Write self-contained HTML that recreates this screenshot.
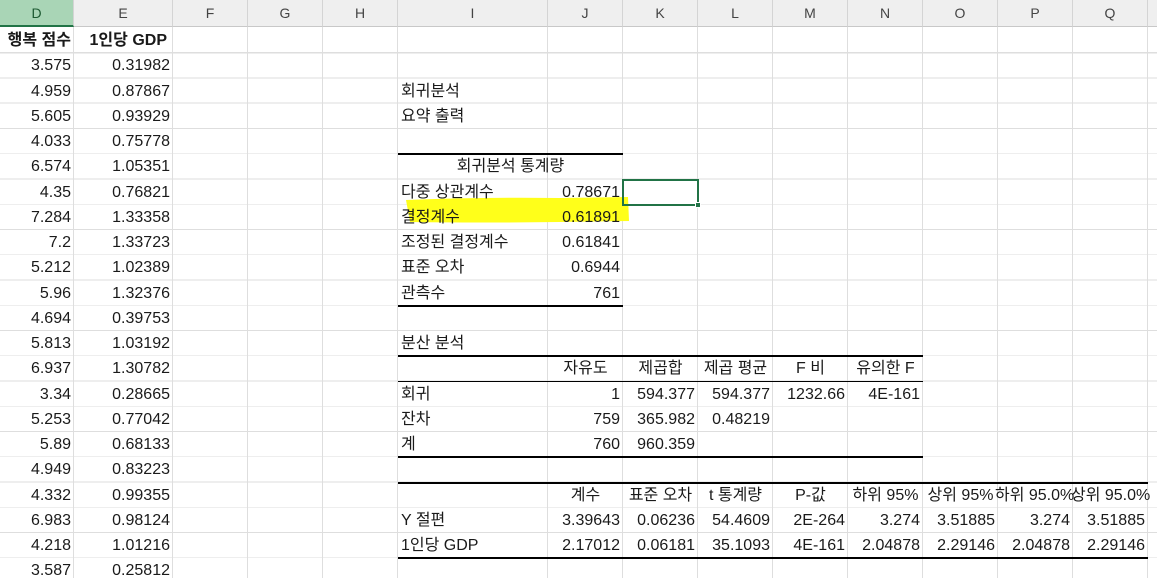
<!DOCTYPE html>
<html><head><meta charset="utf-8"><style>
body{margin:0;width:1157px;height:578px;overflow:hidden;background:#fff;position:relative;font-family:"Liberation Sans","Noto Sans CJK KR","NanumGothic",sans-serif;font-size:16px;color:#1a1a1a}
#grid{position:absolute;left:0;top:28px;width:1157px;height:550px;background:repeating-linear-gradient(to bottom,transparent 0,transparent 24.25px,#dedede 24.25px,#dedede 25.25px)}
.v{position:absolute;top:0;width:1px;height:578px;background:#dedede}
.hd{position:absolute;top:0;height:27px;line-height:27px;background:#efefef;border-right:1px solid #d4d4d4;border-bottom:1px solid #c8c8c8;text-align:center;font-size:14px;color:#444;box-sizing:border-box}
.c{position:absolute;height:25px;line-height:26px;white-space:nowrap;box-sizing:border-box}
.r{text-align:right;padding-right:3px}
.l{padding-left:3px}
.m{text-align:center}
.b{font-weight:bold}
.t{position:absolute;height:2px;background:#000}
</style></head><body>
<div id="grid"></div>
<div class="v" style="left:73px"></div><div class="v" style="left:172px"></div><div class="v" style="left:247px"></div><div class="v" style="left:322px"></div><div class="v" style="left:397px"></div><div class="v" style="left:547px"></div><div class="v" style="left:622px"></div><div class="v" style="left:697px"></div><div class="v" style="left:772px"></div><div class="v" style="left:847px"></div><div class="v" style="left:922px"></div><div class="v" style="left:997px"></div><div class="v" style="left:1072px"></div><div class="v" style="left:1147px"></div>

<div class="hd" style="left:0;width:74px;background:#a9d5b6;color:#1d5a32;border-bottom:2px solid #217346">D</div>
<div class="hd" style="left:74px;width:99px">E</div>
<div class="hd" style="left:173px;width:75px">F</div>
<div class="hd" style="left:248px;width:75px">G</div>
<div class="hd" style="left:323px;width:75px">H</div>
<div class="hd" style="left:398px;width:150px">I</div>
<div class="hd" style="left:548px;width:75px">J</div>
<div class="hd" style="left:623px;width:75px">K</div>
<div class="hd" style="left:698px;width:75px">L</div>
<div class="hd" style="left:773px;width:75px">M</div>
<div class="hd" style="left:848px;width:75px">N</div>
<div class="hd" style="left:923px;width:75px">O</div>
<div class="hd" style="left:998px;width:75px">P</div>
<div class="hd" style="left:1073px;width:75px">Q</div>
<div class="hd" style="left:1148px;width:9px;border-right:none"></div>

<svg style="position:absolute;left:0;top:0" width="1157" height="578"><path d="M406 200 Q480 197 560 198 L628 197 L629 221 L560 222 Q480 223 410 222 Z" fill="#ffff1a"/></svg>

<!-- D/E -->
<div class="c r b" style="left:0;width:74px;top:28px">행복 점수</div>
<div class="c r b" style="left:74px;width:99px;top:28px;padding-right:6px">1인당 GDP</div>
<div class="c r" style="left:0;width:74px;top:53.25px">3.575</div><div class="c r" style="left:74px;width:99px;top:53.25px">0.31982</div>
<div class="c r" style="left:0;width:74px;top:78.5px">4.959</div><div class="c r" style="left:74px;width:99px;top:78.5px">0.87867</div>
<div class="c r" style="left:0;width:74px;top:103.75px">5.605</div><div class="c r" style="left:74px;width:99px;top:103.75px">0.93929</div>
<div class="c r" style="left:0;width:74px;top:129px">4.033</div><div class="c r" style="left:74px;width:99px;top:129px">0.75778</div>
<div class="c r" style="left:0;width:74px;top:154.25px">6.574</div><div class="c r" style="left:74px;width:99px;top:154.25px">1.05351</div>
<div class="c r" style="left:0;width:74px;top:179.5px">4.35</div><div class="c r" style="left:74px;width:99px;top:179.5px">0.76821</div>
<div class="c r" style="left:0;width:74px;top:204.75px">7.284</div><div class="c r" style="left:74px;width:99px;top:204.75px">1.33358</div>
<div class="c r" style="left:0;width:74px;top:230px">7.2</div><div class="c r" style="left:74px;width:99px;top:230px">1.33723</div>
<div class="c r" style="left:0;width:74px;top:255.25px">5.212</div><div class="c r" style="left:74px;width:99px;top:255.25px">1.02389</div>
<div class="c r" style="left:0;width:74px;top:280.5px">5.96</div><div class="c r" style="left:74px;width:99px;top:280.5px">1.32376</div>
<div class="c r" style="left:0;width:74px;top:305.75px">4.694</div><div class="c r" style="left:74px;width:99px;top:305.75px">0.39753</div>
<div class="c r" style="left:0;width:74px;top:331px">5.813</div><div class="c r" style="left:74px;width:99px;top:331px">1.03192</div>
<div class="c r" style="left:0;width:74px;top:356.25px">6.937</div><div class="c r" style="left:74px;width:99px;top:356.25px">1.30782</div>
<div class="c r" style="left:0;width:74px;top:381.5px">3.34</div><div class="c r" style="left:74px;width:99px;top:381.5px">0.28665</div>
<div class="c r" style="left:0;width:74px;top:406.75px">5.253</div><div class="c r" style="left:74px;width:99px;top:406.75px">0.77042</div>
<div class="c r" style="left:0;width:74px;top:432px">5.89</div><div class="c r" style="left:74px;width:99px;top:432px">0.68133</div>
<div class="c r" style="left:0;width:74px;top:457.25px">4.949</div><div class="c r" style="left:74px;width:99px;top:457.25px">0.83223</div>
<div class="c r" style="left:0;width:74px;top:482.5px">4.332</div><div class="c r" style="left:74px;width:99px;top:482.5px">0.99355</div>
<div class="c r" style="left:0;width:74px;top:507.75px">6.983</div><div class="c r" style="left:74px;width:99px;top:507.75px">0.98124</div>
<div class="c r" style="left:0;width:74px;top:533px">4.218</div><div class="c r" style="left:74px;width:99px;top:533px">1.01216</div>
<div class="c r" style="left:0;width:74px;top:558.25px">3.587</div><div class="c r" style="left:74px;width:99px;top:558.25px">0.25812</div>

<!-- summary -->
<div class="c l" style="left:398px;top:78.5px">회귀분석</div>
<div class="c l" style="left:398px;top:103.75px">요약 출력</div>
<div class="c m" style="left:398px;width:225px;top:154.25px">회귀분석 통계량</div>
<div class="c l" style="left:398px;top:179.5px">다중 상관계수</div><div class="c r" style="left:548px;width:75px;top:179.5px">0.78671</div>
<div class="c l" style="left:398px;top:204.75px">결정계수</div><div class="c r" style="left:548px;width:75px;top:204.75px">0.61891</div>
<div class="c l" style="left:398px;top:230px">조정된 결정계수</div><div class="c r" style="left:548px;width:75px;top:230px">0.61841</div>
<div class="c l" style="left:398px;top:255.25px">표준 오차</div><div class="c r" style="left:548px;width:75px;top:255.25px">0.6944</div>
<div class="c l" style="left:398px;top:280.5px">관측수</div><div class="c r" style="left:548px;width:75px;top:280.5px">761</div>
<div class="t" style="left:398px;width:225px;top:153px"></div>
<div class="t" style="left:398px;width:225px;top:304.5px"></div>
<div style="position:absolute;left:622px;top:178.5px;width:77px;height:27px;border:2px solid #217346;box-sizing:border-box"></div>
<div style="position:absolute;left:695px;top:202px;width:6px;height:6px;background:#217346;border:1px solid #fff;box-sizing:border-box"></div>

<!-- ANOVA -->
<div class="c l" style="left:398px;top:331px">분산 분석</div>
<div class="c m" style="left:548px;width:75px;top:356.25px">자유도</div>
<div class="c m" style="left:623px;width:75px;top:356.25px">제곱합</div>
<div class="c m" style="left:698px;width:75px;top:356.25px">제곱 평균</div>
<div class="c m" style="left:773px;width:75px;top:356.25px">F 비</div>
<div class="c m" style="left:848px;width:75px;top:356.25px">유의한 F</div>
<div class="c l" style="left:398px;top:381.5px">회귀</div>
<div class="c r" style="left:548px;width:75px;top:381.5px">1</div><div class="c r" style="left:623px;width:75px;top:381.5px">594.377</div><div class="c r" style="left:698px;width:75px;top:381.5px">594.377</div><div class="c r" style="left:773px;width:75px;top:381.5px">1232.66</div><div class="c r" style="left:848px;width:75px;top:381.5px">4E-161</div>
<div class="c l" style="left:398px;top:406.75px">잔차</div>
<div class="c r" style="left:548px;width:75px;top:406.75px">759</div><div class="c r" style="left:623px;width:75px;top:406.75px">365.982</div><div class="c r" style="left:698px;width:75px;top:406.75px">0.48219</div>
<div class="c l" style="left:398px;top:432px">계</div>
<div class="c r" style="left:548px;width:75px;top:432px">760</div><div class="c r" style="left:623px;width:75px;top:432px">960.359</div>
<div class="t" style="left:398px;width:525px;top:355px"></div>
<div class="t" style="left:398px;width:525px;top:380.5px;height:1.5px"></div>
<div class="t" style="left:398px;width:525px;top:456px"></div>

<!-- coefficients -->
<div class="c m" style="left:548px;width:75px;top:482.5px">계수</div>
<div class="c m" style="left:623px;width:75px;top:482.5px">표준 오차</div>
<div class="c m" style="left:698px;width:75px;top:482.5px">t 통계량</div>
<div class="c m" style="left:773px;width:75px;top:482.5px">P-값</div>
<div class="c m" style="left:848px;width:75px;top:482.5px">하위 95%</div>
<div class="c m" style="left:923px;width:75px;top:482.5px">상위 95%</div>
<div class="c" style="left:995px;top:482.5px">하위 95.0%</div>
<div class="c" style="left:1071px;top:482.5px">상위 95.0%</div>
<div class="c l" style="left:398px;top:507.75px">Y 절편</div>
<div class="c r" style="left:548px;width:75px;top:507.75px">3.39643</div><div class="c r" style="left:623px;width:75px;top:507.75px">0.06236</div><div class="c r" style="left:698px;width:75px;top:507.75px">54.4609</div><div class="c r" style="left:773px;width:75px;top:507.75px">2E-264</div><div class="c r" style="left:848px;width:75px;top:507.75px">3.274</div><div class="c r" style="left:923px;width:75px;top:507.75px">3.51885</div><div class="c r" style="left:998px;width:75px;top:507.75px">3.274</div><div class="c r" style="left:1073px;width:75px;top:507.75px">3.51885</div>
<div class="c l" style="left:398px;top:533px">1인당 GDP</div>
<div class="c r" style="left:548px;width:75px;top:533px">2.17012</div><div class="c r" style="left:623px;width:75px;top:533px">0.06181</div><div class="c r" style="left:698px;width:75px;top:533px">35.1093</div><div class="c r" style="left:773px;width:75px;top:533px">4E-161</div><div class="c r" style="left:848px;width:75px;top:533px">2.04878</div><div class="c r" style="left:923px;width:75px;top:533px">2.29146</div><div class="c r" style="left:998px;width:75px;top:533px">2.04878</div><div class="c r" style="left:1073px;width:75px;top:533px">2.29146</div>
<div class="t" style="left:398px;width:750px;top:481.5px"></div>
<div class="t" style="left:398px;width:750px;top:557px"></div>
</body></html>
